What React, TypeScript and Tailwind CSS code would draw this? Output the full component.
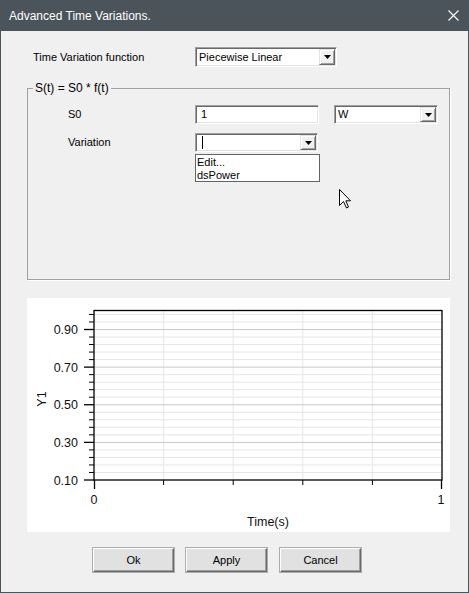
import React from "react";

const sunken =
  "border border-t-[#a0a0a0] border-l-[#a0a0a0] border-r-white border-b-white shadow-[inset_1px_1px_0_#696969,inset_-1px_-1px_0_#e3e3e3] bg-white";

function DropArrow() {
  return (
    <svg width="7" height="4" viewBox="0 0 7 4">
      <path d="M0 0H7L3.5 4Z" fill="#000" />
    </svg>
  );
}

function Combo({
  className,
  children,
}: {
  className: string;
  children?: React.ReactNode;
}) {
  return (
    <div className={`${sunken} ${className} flex p-[1px]`}>
      <div className="flex-1 flex items-center pl-[2px] text-[11px] text-black">{children}</div>
      <div className="w-[16px] h-full flex items-center justify-center bg-[#f0f0f0] border border-t-[#e3e3e3] border-l-[#e3e3e3] border-r-[#696969] border-b-[#696969] shadow-[inset_1px_1px_0_#fff,inset_-1px_-1px_0_#a0a0a0]">
        <DropArrow />
      </div>
    </div>
  );
}

function Button({ label, className }: { label: string; className?: string }) {
  return (
    <button
      className={`w-[81px] h-[24px] bg-[#e1e1e1] text-[11px] text-black border border-t-white border-l-white border-r-[#696969] border-b-[#696969] shadow-[inset_-1px_-1px_0_#a0a0a0,0_0_0_1px_#adadad] ${className ?? ""}`}
    >
      {label}
    </button>
  );
}

function Chart() {
  const left = 67;
  const right = 415;
  const top = 12;
  const bottom = 182;
  const y = (v: number) => bottom - ((v - 0.1) / 0.8) * 150.5;
  const minor: number[] = [];
  for (let v = 0.14; v < 1.0; v += 0.04) {
    const r = Math.round(v * 100) / 100;
    if (Math.round((r - 0.1) * 100) % 20 !== 0) minor.push(r);
  }
  const major = [0.3, 0.5, 0.7, 0.9];
  const xs = [0.2, 0.4, 0.6, 0.8].map((f) => left + f * (right - left));
  return (
    <svg width="423" height="234" className="block">
      {minor.map((v) => (
        <line key={"m" + v} x1={left} x2={right} y1={y(v)} y2={y(v)} stroke="#e6e6e6" />
      ))}
      {xs.map((x) => (
        <line key={"v" + x} x1={x} x2={x} y1={top} y2={bottom} stroke="#e6e6e6" />
      ))}
      {major.map((v) => (
        <line key={"M" + v} x1={left} x2={right} y1={y(v)} y2={y(v)} stroke="#c8c8c8" />
      ))}
      <rect x={left} y={top + 0.5} width={right - left} height={bottom - top - 0.5} fill="none" stroke="#000" strokeWidth="1.3" />
      {minor.map((v) => (
        <line key={"t" + v} x1={left - 5} x2={left} y1={y(v)} y2={y(v)} stroke="#000" />
      ))}
      {[0.1, ...major].map((v) => (
        <g key={"T" + v}>
          <line x1={left - 10} x2={left} y1={y(v)} y2={y(v)} stroke="#000" strokeWidth="1.3" />
          <text
            x={51}
            y={y(v) + 4.5}
            textAnchor="end"
            fontSize="12.5"
            fill="#111"
            fontFamily="'Liberation Sans', Arial, sans-serif"
          >
            {v.toFixed(2)}
          </text>
        </g>
      ))}
      {xs.map((x) => (
        <line key={"xt" + x} x1={x} x2={x} y1={bottom} y2={bottom + 5} stroke="#000" />
      ))}
      <line x1={left + 0.5} x2={left + 0.5} y1={bottom} y2={bottom + 9} stroke="#000" strokeWidth="1.3" />
      <line x1={right - 0.5} x2={right - 0.5} y1={bottom} y2={bottom + 9} stroke="#000" strokeWidth="1.3" />
      <g fontFamily="'Liberation Sans', Arial, sans-serif" fontSize="12.5" fill="#111">
        <text x={left} y={206} textAnchor="middle">0</text>
        <text x={right - 1} y={206} textAnchor="middle">1</text>
        <text x={241} y={228} textAnchor="middle">Time(s)</text>
        <text x={19} y={101} textAnchor="middle" transform="rotate(-90 19 101)">Y1</text>
      </g>
    </svg>
  );
}

export default function App() {
  return (
    <div className="relative w-[469px] h-[593px] bg-[#f0f0f0] border-x border-b border-[#4b545b] flex flex-col [font-family:'Liberation_Sans',Arial,sans-serif] text-black overflow-hidden">
      <div className="h-[31px] -mx-[1px] bg-[#4b545b] flex items-center justify-between pl-[9px] pr-[10px] shrink-0">
        <span className="text-white text-[12px]">Advanced Time Variations.</span>
        <svg width="11" height="11" viewBox="0 0 11 11">
          <path d="M0.5 0.5L10.5 10.5M10.5 0.5L0.5 10.5" stroke="#fff" strokeWidth="1.1" />
        </svg>
      </div>

      <div className="mt-[16px] flex items-center">
        <span className="pl-[32px] w-[194px] text-[11px]">Time Variation function</span>
        <Combo className="w-[142px] h-[20px]">Piecewise Linear</Combo>
      </div>

      <fieldset className="mt-[14px] ml-[26px] w-[423px] h-[199px] border border-[#a0a0a0] shadow-[1px_1px_0_#fff]">
        <legend className="ml-[5px] px-[2px] text-[12px] leading-[14px]">S(t) = S0 * f(t)</legend>
        <div className="mt-[10px] flex items-center">
          <span className="pl-[40px] w-[167px] text-[11px]">S0</span>
          <div className={`${sunken} w-[124px] h-[19px] flex items-center pl-[5px] text-[11px]`}>1</div>
          <Combo className="ml-[15px] w-[104px] h-[19px]">W</Combo>
        </div>
        <div className="mt-[9px] flex items-center">
          <span className="pl-[40px] w-[167px] text-[11px]">Variation</span>
          <div className="relative">
            <Combo className="w-[123px] h-[19px]">
              <span className="ml-[3px] w-[1px] h-[13px] bg-black" />
            </Combo>
            <div className="absolute left-0 top-[21px] w-[125px] h-[28px] bg-white border border-[#646464] text-[11px] leading-[13px] pl-[1px] pt-[1px] z-10">
              <div>Edit...</div>
              <div>dsPower</div>
            </div>
          </div>
        </div>
      </fieldset>

      <div className="mt-[18px] ml-[26px] w-[423px] h-[234px] bg-white">
        <Chart />
      </div>

      <div className="mt-[16px] flex pl-[92px]">
        <Button label="Ok" />
        <Button label="Apply" className="ml-[12px]" />
        <Button label="Cancel" className="ml-[13px]" />
      </div>

      <svg
        className="absolute left-[338px] top-[189px]"
        width="13"
        height="20"
        viewBox="0 0 13 20"
      >
        <path
          d="M0.5 0.5V16.5L4.5 12.5L7.5 19L9.5 18L6.8 11.8H11.5Z"
          fill="#fff"
          stroke="#000"
          strokeLinejoin="round"
        />
      </svg>
    </div>
  );
}
